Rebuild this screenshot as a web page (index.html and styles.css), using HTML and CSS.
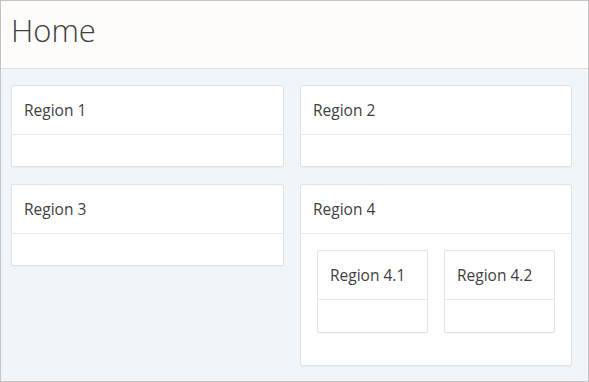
FILE: index.html
```html
<!DOCTYPE html>
<html>
<head>
<meta charset="utf-8">
<link rel="stylesheet" href="styles.css">
</head>
<body>
<div class="frame">
  <header class="page-header">
    <h1 class="page-title">Home</h1>
  </header>
  <main class="page-body">
    <section class="region">
      <div class="region-header">Region 1</div>
      <div class="region-body"></div>
    </section>
    <section class="region">
      <div class="region-header">Region 2</div>
      <div class="region-body"></div>
    </section>
    <section class="region">
      <div class="region-header">Region 3</div>
      <div class="region-body"></div>
    </section>
    <section class="region">
      <div class="region-header">Region 4</div>
      <div class="region-body nested">
        <section class="region sub">
          <div class="region-header">Region 4.1</div>
          <div class="region-body"></div>
        </section>
        <section class="region sub">
          <div class="region-header">Region 4.2</div>
          <div class="region-body"></div>
        </section>
      </div>
    </section>
  </main>
</div>
</body>
</html>
```

FILE: styles.css
```css
* { box-sizing: border-box; }
html, body { margin: 0; padding: 0; }
body {
  font-family: "Open Sans", "Noto Sans", sans-serif;
  color: #404040;
  background: #ffffff;
}
.frame {
  width: 589px;
  height: 382px;
  border: 1px solid #c3c3c3;
  background: #f0f5fa;
  display: flex;
  flex-direction: column;
  overflow: hidden;
}
.page-header {
  height: 68px;
  flex: none;
  background: #fdfcfa;
  border-bottom: 1px solid #dcdee1;
  padding: 9px 0 0 10px;
}
.page-title {
  margin: 0;
  font-size: 31px;
  font-weight: 300;
  line-height: 40px;
  color: #404040;
}
.page-body {
  display: grid;
  grid-template-columns: 273px 272px;
  column-gap: 16px;
  row-gap: 17px;
  align-items: start;
  padding: 16px 16px 0 10px;
}
.region {
  background: #ffffff;
  border: 1px solid #e2e2e2;
  border-radius: 2px;
  box-shadow: 0 1px 1px rgba(0,0,0,0.04);
}
.region-header {
  height: 49px;
  padding: 14px 0 0 12px;
  font-size: 15.5px;
  line-height: 20px;
  border-bottom: 1px solid #e8e8e8;
  color: #404040;
}
.region-body {
  min-height: 31px;
}
.region-body.nested {
  display: grid;
  grid-template-columns: 111px 111px;
  column-gap: 16px;
  padding: 16px 16px 32px 16px;
}
.region.sub .region-body {
  min-height: 32px;
}
```
